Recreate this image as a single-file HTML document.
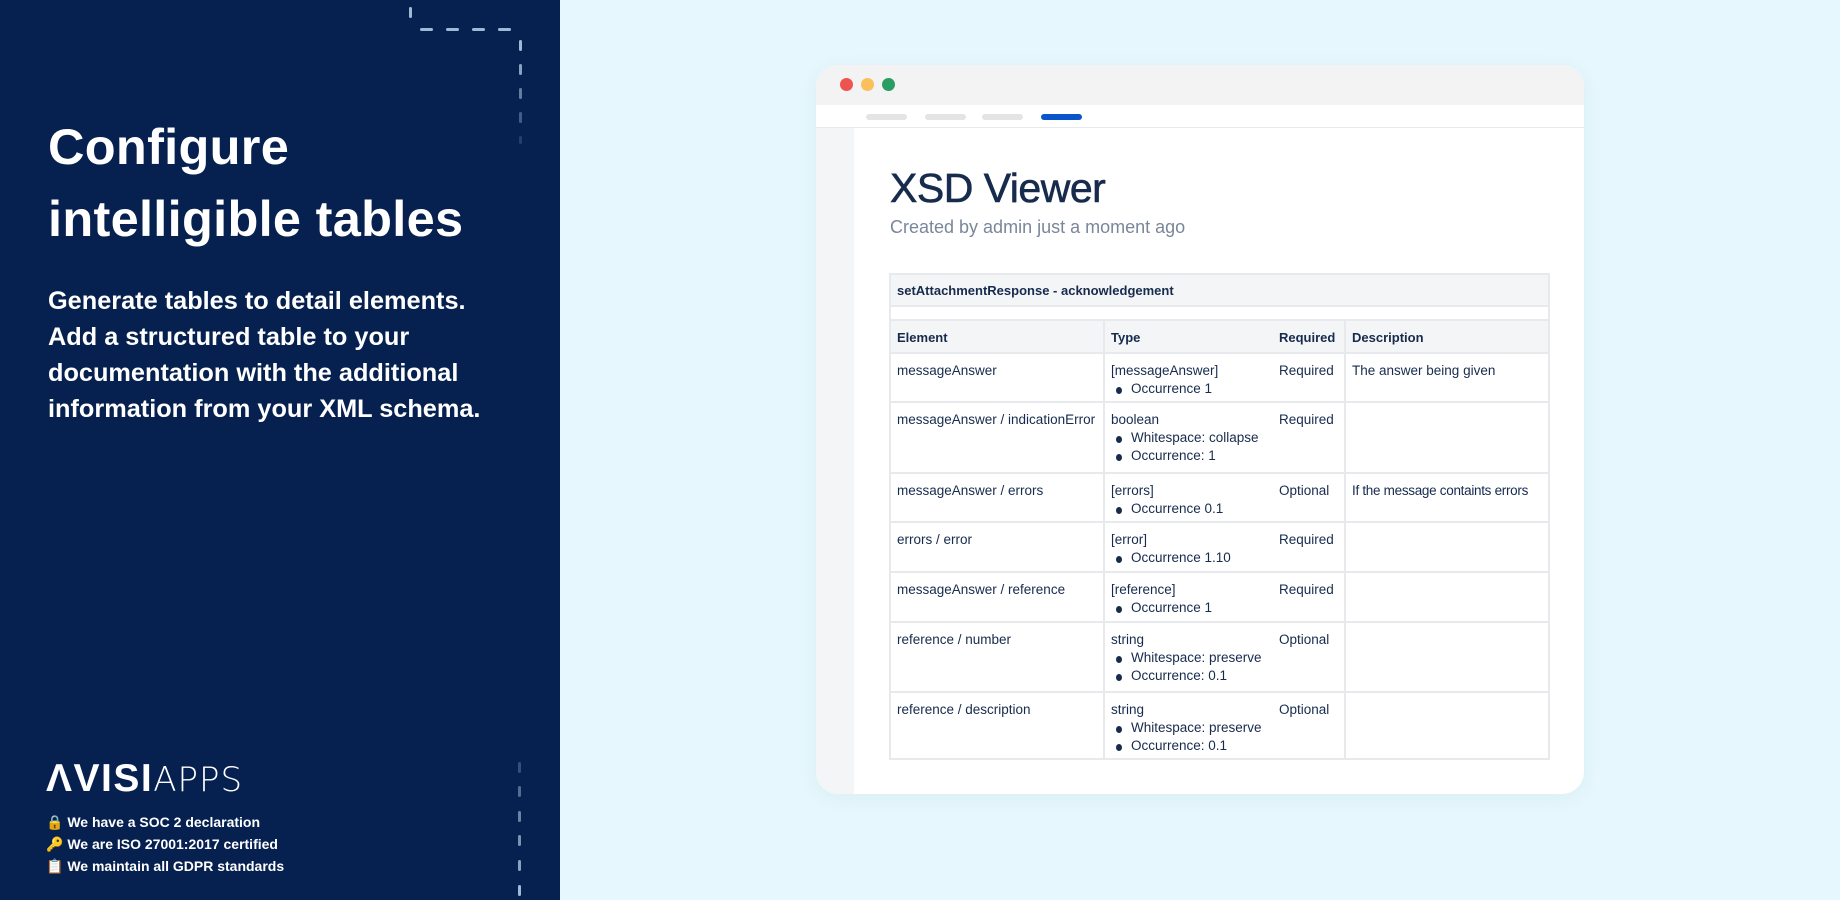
<!DOCTYPE html>
<html><head><meta charset="utf-8"><style>
*{margin:0;padding:0;box-sizing:border-box}
body{width:1840px;height:900px;overflow:hidden;position:relative;background:#e6f8fd;font-family:"Liberation Sans",sans-serif}
#left{position:absolute;left:0;top:0;width:560px;height:900px;background:#062150;color:#fff}
h1{position:absolute;left:48px;top:111px;font-size:50.5px;line-height:72px;font-weight:bold;letter-spacing:0.3px}
.p{position:absolute;left:48px;top:283px;font-size:25.3px;line-height:36px;font-weight:bold;white-space:nowrap}
.logo{position:absolute;left:46px;top:758px;font-size:39px;line-height:42px;letter-spacing:1.5px;white-space:nowrap}
.logo b{font-weight:900}
.logo span{font-family:"DejaVu Sans",sans-serif;font-size:34px;font-weight:200;letter-spacing:1px}
.foot{position:absolute;left:46px;top:811px;font-size:14px;line-height:22px;font-weight:bold}
.dash{position:absolute;background:#9bbcd6;border-radius:2px}
#win{position:absolute;left:816px;top:65px;width:768px;height:729px;background:#fff;border-radius:22px;overflow:hidden;box-shadow:0 4px 20px rgba(0,60,100,0.06)}
.bar{position:absolute;left:0;top:0;width:768px;height:40px;background:#f3f3f3}
.dot{position:absolute;top:13px;width:13px;height:13px;border-radius:50%}
.pill{position:absolute;top:49px;height:6px;border-radius:3px;background:#e4e4e4;width:41px}
.side{position:absolute;left:0;top:63px;width:38px;height:680px;background:#f4f5f7}
.tl{position:absolute;left:0;top:62px;width:768px;height:1px;background:#e6e8ec}
.title{position:absolute;left:74px;top:100px;font-size:41px;color:#172b4d;letter-spacing:-0.5px;-webkit-text-stroke:0.6px #172b4d}
.sub{position:absolute;left:74px;top:152px;font-size:18px;color:#7a869a}
table{position:absolute;left:73px;top:208px;width:660px;border-collapse:collapse;table-layout:fixed;font-size:13.5px;color:#172b4d}
td{border:2px solid #e7e9ed;vertical-align:top;padding:8px 6px 0 6px;line-height:18px;white-space:nowrap;overflow:hidden}
.h td{background:#f4f5f7;font-weight:bold;font-size:13px}
ul{list-style:none}
li{padding-left:20px;position:relative}
li:before{content:"";position:absolute;left:5px;top:7px;width:6px;height:7px;border-radius:50%;background:#172b4d}
td.r{border-left:none;padding-left:0}
td.t{border-right:none}
</style></head><body>
<div id="left">
<h1>Configure<br>intelligible tables</h1>
<div class="p">Generate tables to detail elements.<br>Add a structured table to your<br>documentation with the additional<br>information from your XML schema.</div>
<div class="logo"><b>ΛVISI</b><span>APPS</span></div>
<div class="foot">🔒 We have a SOC 2 declaration<br>🔑 We are ISO 27001:2017 certified<br>📋 We maintain all GDPR standards</div>
<div class="dash" style="left:409px;top:7px;width:3px;height:11px"></div>
<div class="dash" style="left:420px;top:28px;width:13px;height:3px"></div>
<div class="dash" style="left:446px;top:28px;width:13px;height:3px"></div>
<div class="dash" style="left:472px;top:28px;width:13px;height:3px"></div>
<div class="dash" style="left:498px;top:28px;width:13px;height:3px"></div>
<div class="dash" style="left:519px;top:40px;width:3px;height:11px"></div>
<div class="dash" style="left:519px;top:64px;width:3px;height:11px;opacity:.85"></div>
<div class="dash" style="left:519px;top:88px;width:3px;height:11px;opacity:.6"></div>
<div class="dash" style="left:519px;top:112px;width:3px;height:11px;opacity:.4"></div>
<div class="dash" style="left:519px;top:136px;width:3px;height:8px;opacity:.2"></div>
<div class="dash" style="left:518px;top:762px;width:3px;height:11px;opacity:.3"></div>
<div class="dash" style="left:518px;top:786px;width:3px;height:11px;opacity:.5"></div>
<div class="dash" style="left:518px;top:811px;width:3px;height:11px;opacity:.65"></div>
<div class="dash" style="left:518px;top:835px;width:3px;height:11px;opacity:.75"></div>
<div class="dash" style="left:518px;top:860px;width:3px;height:11px;opacity:.85"></div>
<div class="dash" style="left:518px;top:885px;width:3px;height:11px"></div>
</div>
<div id="win">
<div class="bar"></div>
<div class="dot" style="left:24px;background:#ef5350"></div>
<div class="dot" style="left:45px;background:#fbbf5c"></div>
<div class="dot" style="left:66px;background:#2a9d63"></div>
<div class="pill" style="left:50px"></div>
<div class="pill" style="left:109px"></div>
<div class="pill" style="left:166px"></div>
<div class="pill" style="left:225px;background:#0b55cc"></div>
<div class="tl"></div>
<div class="side"></div>
<div class="title">XSD Viewer</div>
<div class="sub">Created by admin just a moment ago</div>
<table>
<colgroup><col style="width:214px"><col style="width:175px"><col style="width:66px"><col style="width:204px"></colgroup>
<tr class="h" style="height:32px"><td colspan="4" style="padding-top:7px">setAttachmentResponse - acknowledgement</td></tr>
<tr style="height:14px"><td colspan="4" style="padding:0"></td></tr>
<tr class="h" style="height:33px"><td>Element</td><td class="t">Type</td><td class="r">Required</td><td>Description</td></tr>
<tr style="height:49px"><td>messageAnswer</td><td class="t">[messageAnswer]<ul><li>Occurrence 1</li></ul></td><td class="r">Required</td><td>The answer being given</td></tr>
<tr style="height:71px"><td>messageAnswer / indicationError</td><td class="t">boolean<ul><li>Whitespace: collapse</li><li>Occurrence: 1</li></ul></td><td class="r">Required</td><td></td></tr>
<tr style="height:49px"><td>messageAnswer / errors</td><td class="t">[errors]<ul><li>Occurrence 0.1</li></ul></td><td class="r">Optional</td><td style="letter-spacing:-0.3px">If the message containts errors</td></tr>
<tr style="height:50px"><td>errors / error</td><td class="t">[error]<ul><li>Occurrence 1.10</li></ul></td><td class="r">Required</td><td></td></tr>
<tr style="height:50px"><td>messageAnswer / reference</td><td class="t">[reference]<ul><li>Occurrence 1</li></ul></td><td class="r">Required</td><td></td></tr>
<tr style="height:70px"><td>reference / number</td><td class="t">string<ul><li>Whitespace: preserve</li><li>Occurrence: 0.1</li></ul></td><td class="r">Optional</td><td></td></tr>
<tr style="height:67px"><td>reference / description</td><td class="t">string<ul><li>Whitespace: preserve</li><li>Occurrence: 0.1</li></ul></td><td class="r">Optional</td><td></td></tr>
</table>
</div>
</body></html>
